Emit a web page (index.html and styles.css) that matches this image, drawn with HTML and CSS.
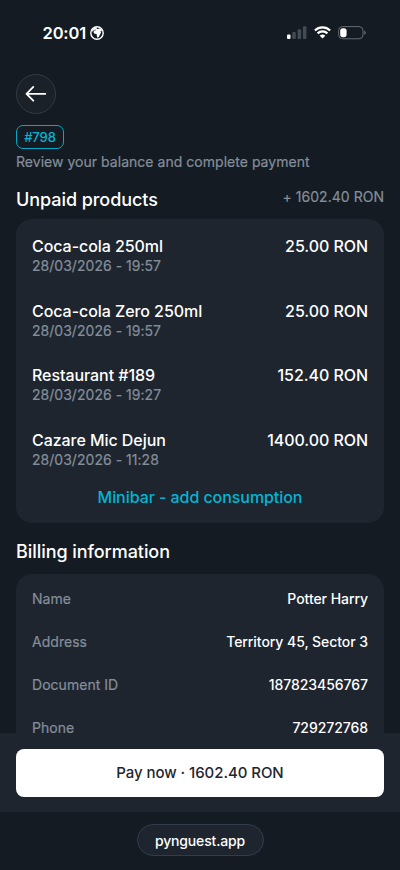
FILE: index.html
```html
<!DOCTYPE html>
<html lang="en">
<head>
<meta charset="utf-8">
<meta name="viewport" content="width=device-width, initial-scale=1">
<title>Payment</title>
<link rel="stylesheet" href="styles.css">
</head>
<body>
<div class="screen">
  <div class="status">
    <div class="clock"><span>20:01</span>
      <svg width="14" height="14" viewBox="0 0 14 14"><circle cx="7" cy="7" r="6.2" fill="none" stroke="#fff" stroke-width="1.4"/><path fill="#fff" d="M3 3.2 5 1.6 7.2 1.5 6.5 2.6 8 3.2 9.1 2.2 11.2 3.2 12.2 5.2 10.4 4.9 11.1 6.5 9.9 8.8 8.8 11 7.4 11.8 6.8 9.7 6.6 8 4.5 7.8 3.5 6.3 4.2 4.6 6.4 4.2 5.2 3.6 3.6 4.4 1.8 6 2 4.5z"/></svg>
    </div>
    <div class="indicators">
      <svg width="20" height="14" viewBox="0 0 20 14"><rect x="0" y="8.6" width="3.5" height="4.4" rx="1" fill="#fff"/><g fill="#454b52"><rect x="5.3" y="6" width="3.5" height="7" rx="1"/><rect x="10.6" y="3.3" width="3.5" height="9.7" rx="1"/><rect x="15.9" y="0.3" width="3.5" height="12.7" rx="1"/></g></svg>
      <svg width="17" height="13" viewBox="0 0 17 13"><g fill="none" stroke="#fff" stroke-width="2.2"><path d="M.9 4.5a10.8 10.8 0 0 1 15.2 0"/><path d="M3.6 7.4a7 7 0 0 1 9.8 0"/></g><path fill="#fff" d="M5.7 9.8a4 4 0 0 1 5.6 0L8.5 12.6z"/></svg>
      <svg width="28" height="14" viewBox="0 0 28 14"><rect x=".6" y=".6" width="24.4" height="12.2" rx="4" fill="none" stroke="#656b72" stroke-width="1"/><rect x="2.2" y="2.2" width="6.4" height="9" rx="2.6" fill="#fff"/><path fill="#656b72" d="M26.2 4.6c2 .8 2 3.4 0 4.2z"/></svg>
    </div>
  </div>

  <main class="content">
    <button class="back" aria-label="Back"><svg width="22" height="18" viewBox="0 0 22 18" fill="none" stroke="#fff" stroke-width="1.8" stroke-linecap="round" stroke-linejoin="round"><path d="M20.3 8.8H1.5M8.3 1.9L1.5 8.8l6.8 6.9"/></svg></button>
    <div class="badge"><span>#798</span></div>
    <p class="intro">Review your balance and complete payment</p>

    <div class="heading"><h2>Unpaid products</h2><span class="total">+ 1602.40 RON</span></div>
    <section class="card products">
      <div class="product"><div class="name">Coca-cola 250ml</div><div class="price">25.00 RON</div><div class="date">28/03/2026 - 19:57</div></div>
      <div class="product"><div class="name">Coca-cola Zero 250ml</div><div class="price">25.00 RON</div><div class="date">28/03/2026 - 19:57</div></div>
      <div class="product"><div class="name">Restaurant #189</div><div class="price">152.40 RON</div><div class="date">28/03/2026 - 19:27</div></div>
      <div class="product"><div class="name">Cazare Mic Dejun</div><div class="price">1400.00 RON</div><div class="date">28/03/2026 - 11:28</div></div>
      <a class="minibar">Minibar - add consumption</a>
    </section>

    <h2 class="billing-title">Billing information</h2>
    <section class="card billing">
      <div class="field"><span>Name</span><b>Potter Harry</b></div>
      <div class="field"><span>Address</span><b>Territory 45, Sector 3</b></div>
      <div class="field"><span>Document ID</span><b>187823456767</b></div>
      <div class="field"><span>Phone</span><b>729272768</b></div>
    </section>
  </main>

  <div class="paybar"><button class="pay"><span>Pay now · 1602.40 RON</span></button></div>
  <footer class="browser"><div class="url"><span>pynguest.app</span></div></footer>
</div>
</body>
</html>
```
FILE: styles.css
```css
* { box-sizing: border-box; }
body { margin: 0; background: #141b22; }
.screen {
  display: flex;
  flex-direction: column;
  width: 400px;
  height: 870px;
  overflow: hidden;
  background: #141b22;
  color: #fff;
  font-family: Inter, "Liberation Sans", sans-serif;
  font-weight: 500;
  letter-spacing: -0.06px;
}
h2, p { margin: 0; }
svg { display: block; flex: none; }
button { padding: 0; font: inherit; letter-spacing: inherit; }
.status {
  display: flex;
  flex: none;
  justify-content: space-between;
  align-items: center;
  height: 65px;
  padding: 0 34px 0 42.5px;
}
.clock { display: flex; align-items: center; gap: 4px; font-size: 16.5px; font-weight: 600; letter-spacing: -0.15px; }
.indicators { display: flex; align-items: center; gap: 7px; }
.content { flex: 1; min-height: 0; padding: 8.6px 16px 0; }
.back {
  display: flex;
  align-items: center;
  justify-content: center;
  width: 40px;
  height: 40px;
  border: 1px solid #343b43;
  border-radius: 50%;
  background: #1a2129;
}
.badge {
  display: flex;
  align-items: center;
  justify-content: center;
  width: 48px;
  height: 24.5px;
  margin-top: 11.4px;
  border: 1px solid #05a9c7;
  border-radius: 7px;
  color: #05b4d4;
  font-size: 13px;
}
.intro, .total, .date, .field span {
  color: #848e9b;
  font-size: 14px;
  font-weight: 400;
  letter-spacing: 0.03px;
  -webkit-text-stroke: 0.2px #848e9b;
}
.intro { margin-top: 2.5px; line-height: 20px; }
.heading { display: flex; justify-content: space-between; height: 47px; }
h2 { font-size: 18px; font-weight: 500; line-height: 26px; }
.heading h2 { padding-top: 15px; }
.total { padding-top: 15px; line-height: 20px; }
.card { border-radius: 16px; background: #1e252e; }
.products { height: 304px; padding: 15px 16px 0; }
.product {
  display: grid;
  grid-template-columns: 1fr auto;
  grid-template-rows: 24px 16px;
  height: 64.7px;
}
.name, .price { font-size: 16px; line-height: 24px; }
.date { line-height: 16px; }
.minibar { display: block; margin-top: -8px; color: #05b4d4; font-size: 16px; line-height: 24px; text-align: center; }
.billing-title { margin-top: 16px; }
.billing { height: 159px; margin-top: 9px; padding: 15.4px 16px 0; border-radius: 16px 16px 0 0; }
.field {
  position: relative;
  z-index: 1;
  display: flex;
  justify-content: space-between;
  height: 42.8px;
  font-size: 14px;
  line-height: 20px;
}
.field b { font-weight: 500; }
.paybar { flex: none; height: 79.5px; padding: 16px 16px 0; background: #1e252e; }
.pay {
  display: block;
  width: 100%;
  height: 48px;
  border: 0;
  border-radius: 8px;
  background: #fff;
  color: #1e252e;
  font-size: 15px;
}
.browser { display: flex; flex: none; justify-content: center; height: 58px; padding-top: 12px; }
.url {
  display: flex;
  align-items: center;
  justify-content: center;
  width: 127px;
  height: 32px;
  border: 1px solid #303d4c;
  border-radius: 16px;
  background: #1e252e;
  font-size: 14px;
  letter-spacing: -0.15px;
}
```
